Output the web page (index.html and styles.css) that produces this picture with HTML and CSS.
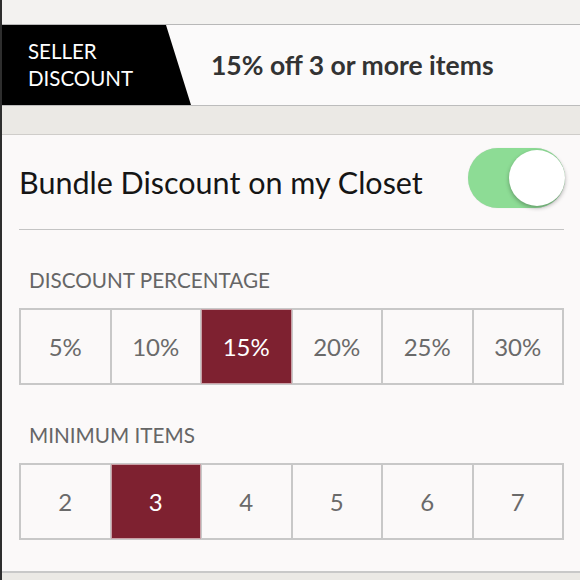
FILE: index.html
```html
<!DOCTYPE html>
<html lang="en">
<head>
    <meta charset="UTF-8">
    <meta name="viewport" content="width=device-width, initial-scale=1.0">
    <title>Bundle Discount</title>
    <link rel="stylesheet" href="styles.css">
</head>
<body>
    <div class="topbar"></div>

    <div class="banner">
        <div class="tag">SELLER<br>DISCOUNT</div>
        <div class="summary">15% off 3 or more items</div>
    </div>

    <div class="spacer"></div>

    <div class="card">
        <div class="toggle-row">
            <span>Bundle Discount on my Closet</span>
            <div class="switch on"><div class="knob"></div></div>
        </div>

        <div class="label">DISCOUNT PERCENTAGE</div>
        <div class="options">
            <div class="option">5%</div>
            <div class="option">10%</div>
            <div class="option selected">15%</div>
            <div class="option">20%</div>
            <div class="option">25%</div>
            <div class="option">30%</div>
        </div>

        <div class="label">MINIMUM ITEMS</div>
        <div class="options">
            <div class="option">2</div>
            <div class="option selected">3</div>
            <div class="option">4</div>
            <div class="option">5</div>
            <div class="option">6</div>
            <div class="option">7</div>
        </div>
    </div>
</body>
</html>
```

FILE: styles.css
```css
body {
    margin: 0;
    width: 580px;
    height: 580px;
    overflow: hidden;
    font-family: Lato, "Open Sans", sans-serif;
    background: #ebe9e5;
    border-left: 2px solid #2e2e2e;
    box-sizing: border-box;
}

.topbar {
    height: 24px;
    background: #f3f2f0;
    border-bottom: 1px solid #b8b8b8;
}

.banner {
    height: 80px;
    display: flex;
    align-items: center;
    background: #fbfafa;
    border-bottom: 1px solid #bcbcbc;
}

.tag {
    width: 190px;
    height: 100%;
    box-sizing: border-box;
    padding: 13px 0 0 26px;
    background: #000;
    color: #fff;
    font-size: 20.5px;
    line-height: 27px;
    clip-path: polygon(0 0, 164px 0, 189px 100%, 0 100%);
}

.summary {
    margin-left: 19px;
    font-size: 26.5px;
    font-weight: bold;
    color: #333;
}

.spacer {
    height: 28px;
    border-bottom: 1px solid #cfcdca;
}

.card {
    height: 438px;
    box-sizing: border-box;
    padding: 0 16px 0 17px;
    background: #fbf9f9;
    border-bottom: 2px solid #c8c8c8;
}

.toggle-row {
    height: 94px;
    display: flex;
    justify-content: space-between;
    align-items: center;
    border-bottom: 1px solid #c4c4c4;
    font-size: 30.5px;
    color: #151515;
}

.switch {
    width: 97px;
    height: 60px;
    margin: 0 -1px 8px 0;
    border-radius: 30px;
    background: #e6e6e6;
    display: flex;
    align-items: center;
    box-shadow: 0 0 1px #cfcfcf;
}

.switch.on {
    background: #8ddc95;
    justify-content: flex-end;
}

.knob {
    width: 56px;
    height: 56px;
    border-radius: 50%;
    background: #fff;
    box-shadow: 0 2px 4px rgba(0, 0, 0, 0.3);
}

.label {
    margin: 38px 0 0 10px;
    font-size: 20.7px;
    color: #666;
}

.options {
    margin-top: 16px;
    display: grid;
    grid-template-columns: repeat(6, 1fr);
    border: 1px solid #c8c8c8;
}

.option {
    height: 73px;
    display: flex;
    justify-content: center;
    align-items: center;
    border: 1px solid #c8c8c8;
    font-size: 24px;
    color: #6a6a6a;
}

.option.selected {
    background: #7e2130;
    border-color: #c9a0a6;
    color: #fff;
}
```
